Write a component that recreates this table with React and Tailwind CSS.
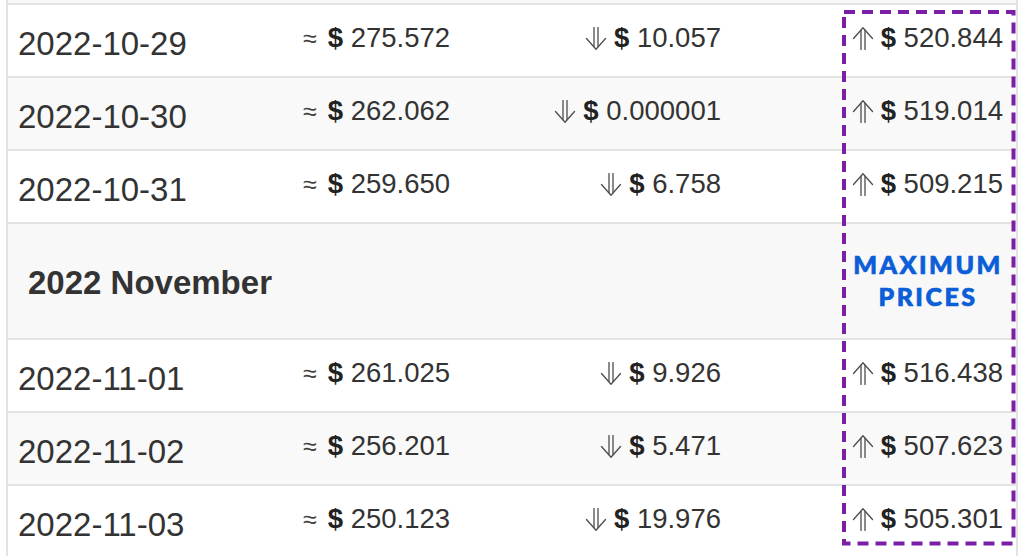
import React from 'react';

// daily price table with a highlighted "maximum prices" column

const october = [
  { date: '2022-10-29', avg: '275.572', min: '10.057', max: '520.844' },
  { date: '2022-10-30', avg: '262.062', min: '0.000001', max: '519.014' },
  { date: '2022-10-31', avg: '259.650', min: '6.758', max: '509.215' },
];

const november = [
  { date: '2022-11-01', avg: '261.025', min: '9.926', max: '516.438' },
  { date: '2022-11-02', avg: '256.201', min: '5.471', max: '507.623' },
  { date: '2022-11-03', avg: '250.123', min: '19.976', max: '505.301' },
];

function Arrow({ up }) {
  return (
    <svg
      width="22"
      height="23"
      viewBox="0 0 22 23"
      className="inline-block align-[-3px] mr-[7px]"
      fill="none"
      stroke="#4d4d4d"
      strokeWidth="1.3"
      strokeLinecap="round"
      strokeLinejoin="round"
    >
      {up ? (
        <g>
          <path d="M9 3.5V22.5M13 3.5V22.5" />
          <path d="M1.5 11.5L11 0.8L20.5 11.5" />
        </g>
      ) : (
        <g>
          <path d="M9 0.5V19.5M13 0.5V19.5" />
          <path d="M1.5 11.5L11 22.2L20.5 11.5" />
        </g>
      )}
    </svg>
  );
}

function Dollar() {
  return <span className="font-bold text-[#222]">$</span>;
}

function DayRow({ row, striped }) {
  return (
    <div
      className={
        striped
          ? 'flex h-[73px] border-t-2 border-[#e3e3e3] bg-[#f9f9f9]'
          : 'flex h-[73px] border-t-2 border-[#e3e3e3] bg-white'
      }
    >
      <div className="w-[285px] pl-[10px] pt-[22px] text-[33px] leading-[33px] text-[#333]">
        {row.date}
      </div>
      <div className="w-[220px] pl-[10px] pt-[19px] text-[27.5px] leading-[28px] text-[#333] whitespace-nowrap">
        <span className="text-[25px] text-[#444] mr-[11px]">≈</span>
        <Dollar /> {row.avg}
      </div>
      <div className="w-[220px] pr-[12px] pt-[19px] text-right text-[27.5px] leading-[28px] text-[#333] whitespace-nowrap">
        <Arrow />
        <Dollar /> {row.min}
      </div>
      <div className="flex-1 pr-[13px] pt-[19px] text-right text-[27.5px] leading-[28px] text-[#333] whitespace-nowrap">
        <Arrow up />
        <Dollar /> {row.max}
      </div>
    </div>
  );
}

export default function App() {
  return (
    <div className="relative w-[1024px] h-[556px] overflow-hidden bg-white font-['Liberation_Sans',Arial,sans-serif]">
      <div className="ml-[6px] w-[1012px] border-x-2 border-[#e3e3e3]">
        <div className="h-[3px] bg-[#f9f9f9]" />
        {october.map((row, i) => (
          <DayRow key={row.date} row={row} striped={i % 2 === 1} />
        ))}

        {/* month header */}
        <div className="flex h-[116px] border-t-2 border-[#e3e3e3] bg-[#f8f8f8]">
          <div className="flex-1 pl-[20px] pt-[43px] text-[33px] leading-[32px] font-bold text-[#333]">
            2022 November
          </div>
          <div className="w-[172px] mr-[2px] pt-[24px] text-center font-['Lato',sans-serif] font-black text-[25px] leading-[32px] tracking-[2.5px] text-[#0b5ed7] [-webkit-text-stroke:0.7px_#0b5ed7]">
            MAXIMUM
            <br />
            PRICES
          </div>
        </div>

        {november.map((row, i) => (
          <DayRow key={row.date} row={row} striped={i % 2 === 1} />
        ))}
      </div>

      {/* dashed highlight round the max column */}
      <svg
        className="absolute left-[840px] top-[8px]"
        width="178"
        height="540"
        viewBox="0 0 178 540"
        fill="none"
      >
        <rect
          x="4"
          y="4"
          width="169.5"
          height="531.5"
          stroke="#7a1fa6"
          strokeWidth="4"
          strokeDasharray="11 7"
        />
      </svg>
    </div>
  );
}
